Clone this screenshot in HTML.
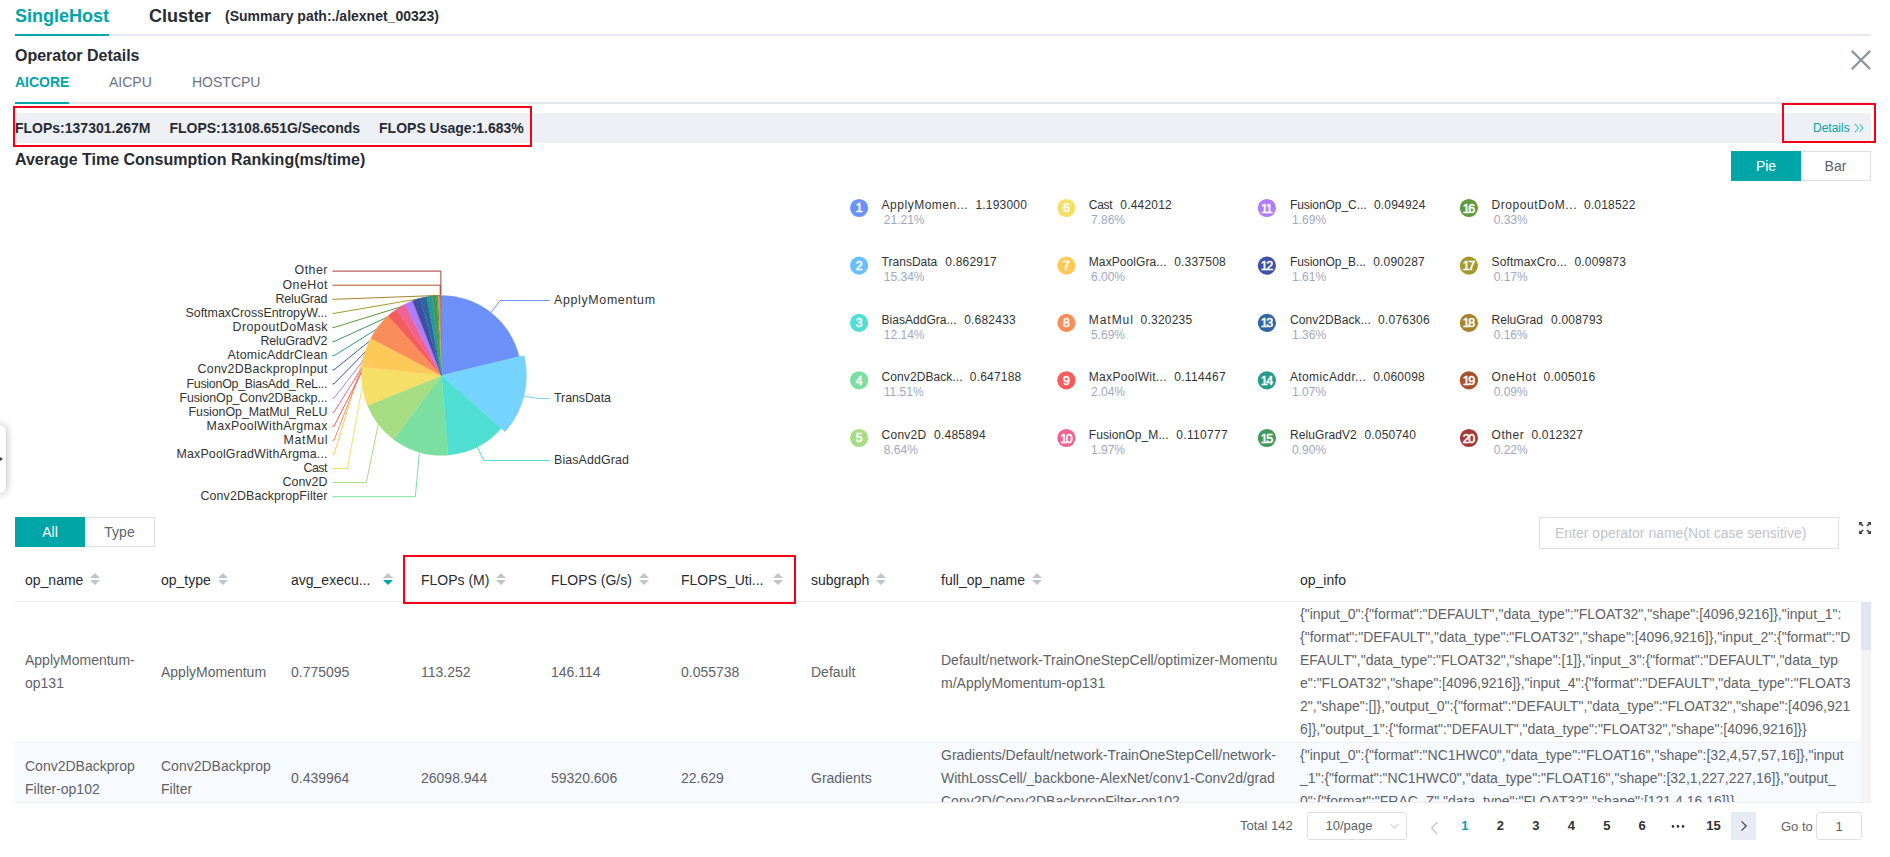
<!DOCTYPE html>
<html><head><meta charset="utf-8"><title>Operator Details</title>
<style>
*{box-sizing:border-box;margin:0;padding:0}
html,body{width:1890px;height:857px;overflow:hidden;background:#fff}
body{font-family:"Liberation Sans",Arial,sans-serif;color:#282b33;position:relative}
.abs{position:absolute;white-space:nowrap}
.chart{position:absolute;left:0;top:0}
.ln{position:absolute;height:2px;background:#e4e7ed}
.teal{background:#00a5a7}
.red{position:absolute;border:2px solid #f5001a}
.btn{position:absolute;height:30px;line-height:28px;text-align:center;font-size:14px;border:1px solid #dcdfe6;color:#606266;background:#fff}
.btn.on{background:#00a5a7;border-color:#00a5a7;color:#fff}
.th{position:absolute;top:556px;height:46px;line-height:46px;padding-left:10px;font-size:14px;color:#282b33;white-space:nowrap}
.thl{display:inline-block;vertical-align:middle}
.srt{display:inline-block;vertical-align:middle;position:relative;top:-1px}
.tbody{position:absolute;left:15px;top:602px;width:1846px;height:200px;overflow:hidden}
.tr{position:absolute;left:0;width:1846px;border-bottom:1px solid #ebeef5}
.tr.odd{background:#f7faff}
.td{position:absolute;top:0;height:100%;display:flex;align-items:center;padding:0 10px;font-size:14px;line-height:23px;color:#606266}
.cell{white-space:nowrap}
.pg{position:absolute;top:812px;height:28px;line-height:27px;font-size:13px;color:#303133;white-space:nowrap}
</style></head><body>
<div class="abs" style="left:15px;top:5px;font-size:18px;font-weight:bold;color:#00a5a7;line-height:22px">SingleHost</div>
<div class="abs" style="left:149px;top:5px;font-size:18px;font-weight:bold;color:#282b33;line-height:22px">Cluster</div>
<div class="abs" style="left:225px;top:7px;font-size:14px;font-weight:bold;color:#282b33;line-height:18px">(Summary path:./alexnet_00323)</div>
<div class="ln" style="left:15px;top:34px;width:1856px"></div>
<div class="ln teal" style="left:15px;top:34px;width:94px"></div>
<div class="abs" style="left:15px;top:46px;font-size:16px;font-weight:bold;line-height:20px">Operator Details</div>
<svg class="abs" style="left:1851px;top:50px" width="20" height="20" viewBox="0 0 20 20"><path d="M1.5 1.5L18.5 18.5M18.5 1.5L1.5 18.5" stroke="#8f939c" stroke-width="2.4" stroke-linecap="round" fill="none"/></svg>
<div class="abs" style="left:15px;top:73px;font-size:14px;font-weight:bold;color:#00a5a7;line-height:18px">AICORE</div>
<div class="abs" style="left:109px;top:73px;font-size:14px;color:#6c7280;line-height:18px">AICPU</div>
<div class="abs" style="left:192px;top:73px;font-size:14px;color:#6c7280;line-height:18px">HOSTCPU</div>
<div class="ln" style="left:15px;top:102px;width:1856px"></div>
<div class="ln teal" style="left:15px;top:102px;width:54px"></div>
<div class="abs" style="left:15px;top:113px;width:1856px;height:30px;background:#edf0f5"></div>
<div class="abs" style="left:15px;top:119px;font-size:14px;font-weight:bold;line-height:18px;color:#282b33">FLOPs:137301.267M<span style="display:inline-block;width:19px"></span>FLOPS:13108.651G/Seconds<span style="display:inline-block;width:19px"></span>FLOPS Usage:1.683%</div>
<div class="red" style="left:13px;top:106px;width:519px;height:41px"></div>
<div class="abs" style="left:1813px;top:121px;font-size:12px;color:#00a5a7;line-height:14px">Details</div>
<svg class="abs" style="left:1854px;top:123px" width="10" height="10" viewBox="0 0 10 10"><path d="M1 1L4.5 5L1 9M5.5 1L9 5L5.5 9" stroke="#00a5a7" stroke-width="0.9" fill="none"/></svg>
<div class="red" style="left:1782px;top:103px;width:94px;height:40px"></div>
<div class="abs" style="left:15px;top:150px;font-size:16px;font-weight:bold;line-height:20px">Average Time Consumption Ranking(ms/time)</div>
<div class="btn on" style="left:1731px;top:151px;width:70px">Pie</div>
<div class="btn" style="left:1801px;top:151px;width:70px;border-left:none">Bar</div>
<svg class="chart" width="1890" height="857" viewBox="0 0 1890 857" font-family="'Liberation Sans', sans-serif">
<g fill="none" stroke-width="1"><polyline points="491.0,312.5 500.2,300.5 549.5,300.5" stroke="#6c92fa"/><polyline points="524.0,396.0 538.5,398.5 549.5,398.5" stroke="#76d3ff"/><polyline points="477.2,447.0 483.9,460.5 549.5,460.5" stroke="#4eded2"/><polyline points="332.4,496.7 415.3,496.7 419.4,452.3" stroke="#7adfa0"/><polyline points="332.4,482.6 366.3,482.6 378.2,424.3" stroke="#a6dd82"/><polyline points="332.4,468.5 347.4,468.5 362.3,386.5" stroke="#f6df66"/><polyline points="332.4,454.4 334,454.4 365.0,352.1" stroke="#fdca5a"/><polyline points="332.4,440.3 334,440.3 378.5,326.1" stroke="#fa8e5a"/><polyline points="332.4,426.2 334,426.2 392.2,312.4" stroke="#f45c5e"/><polyline points="332.4,412.1 334,412.1 400.4,306.7" stroke="#f06292"/><polyline points="332.4,398.0 334,398.0 408.6,302.5" stroke="#b07cf7"/><polyline points="332.4,383.9 334,383.9 416.3,299.5" stroke="#3c51a6"/><polyline points="332.4,369.8 334,369.8 423.5,297.5" stroke="#2f66a1"/><polyline points="332.4,355.7 334,355.7 429.5,296.3" stroke="#279a8d"/><polyline points="332.4,341.6 334,341.6 434.4,295.7" stroke="#43975c"/><polyline points="332.4,327.5 334,327.5 437.5,295.5" stroke="#5e9a3e"/><polyline points="332.4,313.4 334,313.4 438.7,295.4" stroke="#a39a2c"/><polyline points="332.4,299.3 334,299.3 439.6,295.4" stroke="#a8822b"/><polyline points="332.4,285.2 440.2,285.2 440.2,295.4" stroke="#a8502b"/><polyline points="332.4,271.1 440.9,271.1 440.9,295.4" stroke="#a53a3a"/></g>
<g><path d="M441.50 375.40L441.50 295.40A80.0 80.0 0 0 1 519.25 356.55Z" fill="#6c92fa" stroke="#6c92fa" stroke-width="0.3"/><path d="M441.50 375.40L524.11 355.38A85.0 85.0 0 0 1 505.05 431.85Z" fill="#76d3ff" stroke="#76d3ff" stroke-width="0.3"/><path d="M441.50 375.40L501.31 428.53A80.0 80.0 0 0 1 448.05 455.13Z" fill="#4eded2" stroke="#4eded2" stroke-width="0.3"/><path d="M441.50 375.40L448.05 455.13A80.0 80.0 0 0 1 393.65 439.51Z" fill="#7adfa0" stroke="#7adfa0" stroke-width="0.3"/><path d="M441.50 375.40L393.65 439.51A80.0 80.0 0 0 1 367.41 405.57Z" fill="#a6dd82" stroke="#a6dd82" stroke-width="0.3"/><path d="M441.50 375.40L367.41 405.57A80.0 80.0 0 0 1 361.96 366.84Z" fill="#f6df66" stroke="#f6df66" stroke-width="0.3"/><path d="M441.50 375.40L361.96 366.84A80.0 80.0 0 0 1 370.70 338.15Z" fill="#fdca5a" stroke="#fdca5a" stroke-width="0.3"/><path d="M441.50 375.40L370.70 338.15A80.0 80.0 0 0 1 388.23 315.71Z" fill="#fa8e5a" stroke="#fa8e5a" stroke-width="0.3"/><path d="M441.50 375.40L388.23 315.71A80.0 80.0 0 0 1 396.28 309.41Z" fill="#f45c5e" stroke="#f45c5e" stroke-width="0.3"/><path d="M441.50 375.40L396.28 309.41A80.0 80.0 0 0 1 404.77 304.33Z" fill="#f06292" stroke="#f06292" stroke-width="0.3"/><path d="M441.50 375.40L404.77 304.33A80.0 80.0 0 0 1 412.50 300.84Z" fill="#b07cf7" stroke="#b07cf7" stroke-width="0.3"/><path d="M441.50 375.40L412.50 300.84A80.0 80.0 0 0 1 420.16 298.30Z" fill="#3c51a6" stroke="#3c51a6" stroke-width="0.3"/><path d="M441.50 375.40L420.16 298.30A80.0 80.0 0 0 1 426.80 296.76Z" fill="#2f66a1" stroke="#2f66a1" stroke-width="0.3"/><path d="M441.50 375.40L426.80 296.76A80.0 80.0 0 0 1 432.11 295.95Z" fill="#279a8d" stroke="#279a8d" stroke-width="0.3"/><path d="M441.50 375.40L432.11 295.95A80.0 80.0 0 0 1 436.63 295.55Z" fill="#43975c" stroke="#43975c" stroke-width="0.3"/><path d="M441.50 375.40L436.63 295.55A80.0 80.0 0 0 1 438.28 295.46Z" fill="#5e9a3e"/><path d="M441.50 375.40L438.28 295.46A80.0 80.0 0 0 1 439.16 295.43Z" fill="#a39a2c"/><path d="M441.50 375.40L439.16 295.43A80.0 80.0 0 0 1 439.95 295.42Z" fill="#a8822b"/><path d="M441.50 375.40L439.95 295.42A80.0 80.0 0 0 1 440.40 295.41Z" fill="#a8502b"/><path d="M441.50 375.40L440.40 295.41A80.0 80.0 0 0 1 441.50 295.40Z" fill="#a53a3a"/></g>
<g font-size="12.4" fill="#333"><text x="554" y="304.2" textLength="101">ApplyMomentum</text><text x="554" y="402.3" textLength="57">TransData</text><text x="554" y="464.1" textLength="75">BiasAddGrad</text><text x="327.5" y="500.4" text-anchor="end" textLength="127">Conv2DBackpropFilter</text><text x="327.5" y="486.3" text-anchor="end" textLength="45">Conv2D</text><text x="327.5" y="472.2" text-anchor="end" textLength="24">Cast</text><text x="327.5" y="458.1" text-anchor="end" textLength="151">MaxPoolGradWithArgma...</text><text x="327.5" y="444.0" text-anchor="end" textLength="44">MatMul</text><text x="327.5" y="429.9" text-anchor="end" textLength="121">MaxPoolWithArgmax</text><text x="327.5" y="415.8" text-anchor="end" textLength="139">FusionOp_MatMul_ReLU</text><text x="327.5" y="401.7" text-anchor="end" textLength="148">FusionOp_Conv2DBackp...</text><text x="327.5" y="387.6" text-anchor="end" textLength="141">FusionOp_BiasAdd_ReL...</text><text x="327.5" y="372.8" text-anchor="end" textLength="130">Conv2DBackpropInput</text><text x="327.5" y="359.4" text-anchor="end" textLength="100">AtomicAddrClean</text><text x="327.5" y="345.3" text-anchor="end" textLength="67">ReluGradV2</text><text x="327.5" y="331.2" text-anchor="end" textLength="95">DropoutDoMask</text><text x="327.5" y="317.1" text-anchor="end" textLength="142">SoftmaxCrossEntropyW...</text><text x="327.5" y="303.0" text-anchor="end" textLength="52">ReluGrad</text><text x="327.5" y="288.9" text-anchor="end" textLength="45">OneHot</text><text x="327.5" y="274.1" text-anchor="end" textLength="33">Other</text></g>
<g><circle cx="859.1" cy="208.0" r="9.1" fill="#6c92fa"/><text x="859.1" y="212.4" text-anchor="middle" fill="#fff" font-size="12.3" stroke="#fff" stroke-width="0.55">1</text><text x="881.6" y="208.7" fill="#333" font-size="12" textLength="86.1">ApplyMomen...</text><text x="975.4" y="208.7" fill="#333" font-size="12" textLength="51.5">1.193000</text><text x="883.8" y="223.8" fill="#9ea8c2" font-size="12">21.21%</text><circle cx="859.1" cy="265.6" r="9.1" fill="#6cbfff"/><text x="859.1" y="270.0" text-anchor="middle" fill="#fff" font-size="12.3" stroke="#fff" stroke-width="0.55">2</text><text x="881.6" y="266.3" fill="#333" font-size="12" textLength="55.7">TransData</text><text x="945.3" y="266.3" fill="#333" font-size="12" textLength="51.5">0.862917</text><text x="883.8" y="281.4" fill="#9ea8c2" font-size="12">15.34%</text><circle cx="859.1" cy="322.9" r="9.1" fill="#4eded2"/><text x="859.1" y="327.3" text-anchor="middle" fill="#fff" font-size="12.3" stroke="#fff" stroke-width="0.55">3</text><text x="881.6" y="323.6" fill="#333" font-size="12" textLength="74.9">BiasAddGra...</text><text x="964.2" y="323.6" fill="#333" font-size="12" textLength="51.5">0.682433</text><text x="883.8" y="338.7" fill="#9ea8c2" font-size="12">12.14%</text><circle cx="859.1" cy="380.3" r="9.1" fill="#7adfa0"/><text x="859.1" y="384.7" text-anchor="middle" fill="#fff" font-size="12.3" stroke="#fff" stroke-width="0.55">4</text><text x="881.6" y="381.0" fill="#333" font-size="12" textLength="80.9">Conv2DBack...</text><text x="969.8" y="381.0" fill="#333" font-size="12" textLength="51.5">0.647188</text><text x="883.8" y="396.1" fill="#9ea8c2" font-size="12">11.51%</text><circle cx="859.1" cy="438.0" r="9.1" fill="#a6dd82"/><text x="859.1" y="442.4" text-anchor="middle" fill="#fff" font-size="12.3" stroke="#fff" stroke-width="0.55">5</text><text x="881.6" y="438.7" fill="#333" font-size="12" textLength="44.5">Conv2D</text><text x="934.1" y="438.7" fill="#333" font-size="12" textLength="51.5">0.485894</text><text x="883.8" y="453.8" fill="#9ea8c2" font-size="12">8.64%</text><circle cx="1066.4" cy="208.0" r="9.1" fill="#f6df66"/><text x="1066.4" y="212.4" text-anchor="middle" fill="#fff" font-size="12.3" stroke="#fff" stroke-width="0.55">6</text><text x="1088.8" y="208.7" fill="#333" font-size="12" textLength="23.8">Cast</text><text x="1120.3" y="208.7" fill="#333" font-size="12" textLength="51.5">0.442012</text><text x="1091.0" y="223.8" fill="#9ea8c2" font-size="12">7.86%</text><circle cx="1066.4" cy="265.6" r="9.1" fill="#fdca5a"/><text x="1066.4" y="270.0" text-anchor="middle" fill="#fff" font-size="12.3" stroke="#fff" stroke-width="0.55">7</text><text x="1088.8" y="266.3" fill="#333" font-size="12" textLength="77.7">MaxPoolGra...</text><text x="1174.2" y="266.3" fill="#333" font-size="12" textLength="51.5">0.337508</text><text x="1091.0" y="281.4" fill="#9ea8c2" font-size="12">6.00%</text><circle cx="1066.4" cy="322.9" r="9.1" fill="#fa8e5a"/><text x="1066.4" y="327.3" text-anchor="middle" fill="#fff" font-size="12.3" stroke="#fff" stroke-width="0.55">8</text><text x="1088.8" y="323.6" fill="#333" font-size="12" textLength="44.1">MatMul</text><text x="1140.6" y="323.6" fill="#333" font-size="12" textLength="51.5">0.320235</text><text x="1091.0" y="338.7" fill="#9ea8c2" font-size="12">5.69%</text><circle cx="1066.4" cy="380.3" r="9.1" fill="#f45c5e"/><text x="1066.4" y="384.7" text-anchor="middle" fill="#fff" font-size="12.3" stroke="#fff" stroke-width="0.55">9</text><text x="1088.8" y="381.0" fill="#333" font-size="12" textLength="77.7">MaxPoolWit...</text><text x="1174.2" y="381.0" fill="#333" font-size="12" textLength="51.5">0.114467</text><text x="1091.0" y="396.1" fill="#9ea8c2" font-size="12">2.04%</text><circle cx="1066.4" cy="438.0" r="9.1" fill="#f06292"/><text x="1065.8" y="442.5" text-anchor="middle" fill="#fff" font-size="12.5" stroke="#fff" stroke-width="0.55" letter-spacing="-1.3">10</text><text x="1088.8" y="438.7" fill="#333" font-size="12" textLength="79.8">FusionOp_M...</text><text x="1176.3" y="438.7" fill="#333" font-size="12" textLength="51.5">0.110777</text><text x="1091.0" y="453.8" fill="#9ea8c2" font-size="12">1.97%</text><circle cx="1266.9" cy="208.0" r="9.1" fill="#b07cf7"/><text x="1266.3" y="212.5" text-anchor="middle" fill="#fff" font-size="12.5" stroke="#fff" stroke-width="0.55" letter-spacing="-1.3">11</text><text x="1289.9" y="208.7" fill="#333" font-size="12" textLength="76.7">FusionOp_C...</text><text x="1373.9" y="208.7" fill="#333" font-size="12" textLength="51.5">0.094924</text><text x="1292.1" y="223.8" fill="#9ea8c2" font-size="12">1.69%</text><circle cx="1266.9" cy="265.6" r="9.1" fill="#3c51a6"/><text x="1266.3" y="270.1" text-anchor="middle" fill="#fff" font-size="12.5" stroke="#fff" stroke-width="0.55" letter-spacing="-1.3">12</text><text x="1289.9" y="266.3" fill="#333" font-size="12" textLength="76">FusionOp_B...</text><text x="1373.2" y="266.3" fill="#333" font-size="12" textLength="51.5">0.090287</text><text x="1292.1" y="281.4" fill="#9ea8c2" font-size="12">1.61%</text><circle cx="1266.9" cy="322.9" r="9.1" fill="#2f66a1"/><text x="1266.3" y="327.4" text-anchor="middle" fill="#fff" font-size="12.5" stroke="#fff" stroke-width="0.55" letter-spacing="-1.3">13</text><text x="1289.9" y="323.6" fill="#333" font-size="12" textLength="80.9">Conv2DBack...</text><text x="1378.1" y="323.6" fill="#333" font-size="12" textLength="51.5">0.076306</text><text x="1292.1" y="338.7" fill="#9ea8c2" font-size="12">1.36%</text><circle cx="1266.9" cy="380.3" r="9.1" fill="#279a8d"/><text x="1266.3" y="384.8" text-anchor="middle" fill="#fff" font-size="12.5" stroke="#fff" stroke-width="0.55" letter-spacing="-1.3">14</text><text x="1289.9" y="381.0" fill="#333" font-size="12" textLength="76">AtomicAddr...</text><text x="1373.2" y="381.0" fill="#333" font-size="12" textLength="51.5">0.060098</text><text x="1292.1" y="396.1" fill="#9ea8c2" font-size="12">1.07%</text><circle cx="1266.9" cy="438.0" r="9.1" fill="#43975c"/><text x="1266.3" y="442.5" text-anchor="middle" fill="#fff" font-size="12.5" stroke="#fff" stroke-width="0.55" letter-spacing="-1.3">15</text><text x="1289.9" y="438.7" fill="#333" font-size="12" textLength="66.9">ReluGradV2</text><text x="1364.4" y="438.7" fill="#333" font-size="12" textLength="51.5">0.050740</text><text x="1292.1" y="453.8" fill="#9ea8c2" font-size="12">0.90%</text><circle cx="1468.9" cy="208.0" r="9.1" fill="#5e9a3e"/><text x="1468.3" y="212.5" text-anchor="middle" fill="#fff" font-size="12.5" stroke="#fff" stroke-width="0.55" letter-spacing="-1.3">16</text><text x="1491.5" y="208.7" fill="#333" font-size="12" textLength="85">DropoutDoM...</text><text x="1583.9" y="208.7" fill="#333" font-size="12" textLength="51.5">0.018522</text><text x="1493.7" y="223.8" fill="#9ea8c2" font-size="12">0.33%</text><circle cx="1468.9" cy="265.6" r="9.1" fill="#a39a2c"/><text x="1468.3" y="270.1" text-anchor="middle" fill="#fff" font-size="12.5" stroke="#fff" stroke-width="0.55" letter-spacing="-1.3">17</text><text x="1491.5" y="266.3" fill="#333" font-size="12" textLength="75.3">SoftmaxCro...</text><text x="1574.4" y="266.3" fill="#333" font-size="12" textLength="51.5">0.009873</text><text x="1493.7" y="281.4" fill="#9ea8c2" font-size="12">0.17%</text><circle cx="1468.9" cy="322.9" r="9.1" fill="#a8822b"/><text x="1468.3" y="327.4" text-anchor="middle" fill="#fff" font-size="12.5" stroke="#fff" stroke-width="0.55" letter-spacing="-1.3">18</text><text x="1491.5" y="323.6" fill="#333" font-size="12" textLength="51.5">ReluGrad</text><text x="1551" y="323.6" fill="#333" font-size="12" textLength="51.5">0.008793</text><text x="1493.7" y="338.7" fill="#9ea8c2" font-size="12">0.16%</text><circle cx="1468.9" cy="380.3" r="9.1" fill="#a8502b"/><text x="1468.3" y="384.8" text-anchor="middle" fill="#fff" font-size="12.5" stroke="#fff" stroke-width="0.55" letter-spacing="-1.3">19</text><text x="1491.5" y="381.0" fill="#333" font-size="12" textLength="44.5">OneHot</text><text x="1543.6" y="381.0" fill="#333" font-size="12" textLength="51.5">0.005016</text><text x="1493.7" y="396.1" fill="#9ea8c2" font-size="12">0.09%</text><circle cx="1468.9" cy="438.0" r="9.1" fill="#a53a3a"/><text x="1468.3" y="442.5" text-anchor="middle" fill="#fff" font-size="12.5" stroke="#fff" stroke-width="0.55" letter-spacing="-1.3">20</text><text x="1491.5" y="438.7" fill="#333" font-size="12" textLength="32.2">Other</text><text x="1531.4" y="438.7" fill="#333" font-size="12" textLength="51.5">0.012327</text><text x="1493.7" y="453.8" fill="#9ea8c2" font-size="12">0.22%</text></g>
</svg>
<div class="abs" style="left:-4px;top:425px;width:10px;height:68px;background:#fff;border-radius:0 6px 6px 0;box-shadow:0 0 9px rgba(0,0,0,.32)"></div>
<div class="abs" style="left:0;top:457px;width:0;height:0;border:2.5px solid transparent;border-left:3px solid #3e4355;border-right:none"></div>
<div class="btn on" style="left:15px;top:517px;width:70px">All</div>
<div class="btn" style="left:85px;top:517px;width:70px;border-left:none">Type</div>
<div class="abs" style="left:1539px;top:517px;width:300px;height:32px;border:1px solid #dcdfe6;font-size:14px;color:#c0c4cc;line-height:30px;padding-left:15px">Enter operator name(Not case sensitive)</div>
<svg class="abs" style="left:1858px;top:521px" width="14" height="14" viewBox="0 0 13 13"><path d="M1 1h3.5L3.3 2.2 5.2 4.1 4.1 5.2 2.2 3.3 1 4.5zM12 1v3.5L10.800000000000001 3.3 8.9 5.2 7.8 4.1 9.7 2.2 8.5 1zM1 12V8.5L2.2 9.7 4.1 7.8 5.2 8.9 3.3 10.8 4.5 12zM12 12H8.5L9.7 10.8 7.8 8.9 8.9 7.8 10.8 9.7 12 8.5z" fill="#3e4355"/></svg>
<div class="th" style="left:15px;width:130px"><span class="thl">op_name</span><svg class="srt" style="margin-left:7px" width="10" height="12" viewBox="0 0 10 12"><path d="M5 0L10 5H0z" fill="#c0c4cc"/><path d="M0 7H10L5 12z" fill="#c0c4cc"/></svg></div><div class="th" style="left:151px;width:130px"><span class="thl">op_type</span><svg class="srt" style="margin-left:7px" width="10" height="12" viewBox="0 0 10 12"><path d="M5 0L10 5H0z" fill="#c0c4cc"/><path d="M0 7H10L5 12z" fill="#c0c4cc"/></svg></div><div class="th" style="left:281px;width:130px"><span class="thl">avg_execu...</span><svg class="srt" style="margin-left:13px" width="10" height="12" viewBox="0 0 10 12"><path d="M5 0L10 5H0z" fill="#c0c4cc"/><path d="M0 7H10L5 12z" fill="#00a5a7"/></svg></div><div class="th" style="left:411px;width:130px"><span class="thl">FLOPs (M)</span><svg class="srt" style="margin-left:7px" width="10" height="12" viewBox="0 0 10 12"><path d="M5 0L10 5H0z" fill="#c0c4cc"/><path d="M0 7H10L5 12z" fill="#c0c4cc"/></svg></div><div class="th" style="left:541px;width:130px"><span class="thl">FLOPS (G/s)</span><svg class="srt" style="margin-left:7px" width="10" height="12" viewBox="0 0 10 12"><path d="M5 0L10 5H0z" fill="#c0c4cc"/><path d="M0 7H10L5 12z" fill="#c0c4cc"/></svg></div><div class="th" style="left:671px;width:130px"><span class="thl">FLOPS_Uti...</span><svg class="srt" style="margin-left:10px" width="10" height="12" viewBox="0 0 10 12"><path d="M5 0L10 5H0z" fill="#c0c4cc"/><path d="M0 7H10L5 12z" fill="#c0c4cc"/></svg></div><div class="th" style="left:801px;width:130px"><span class="thl">subgraph</span><svg class="srt" style="margin-left:7px" width="10" height="12" viewBox="0 0 10 12"><path d="M5 0L10 5H0z" fill="#c0c4cc"/><path d="M0 7H10L5 12z" fill="#c0c4cc"/></svg></div><div class="th" style="left:931px;width:359px"><span class="thl">full_op_name</span><svg class="srt" style="margin-left:7px" width="10" height="12" viewBox="0 0 10 12"><path d="M5 0L10 5H0z" fill="#c0c4cc"/><path d="M0 7H10L5 12z" fill="#c0c4cc"/></svg></div><div class="th" style="left:1290px;width:571px"><span class="thl">op_info</span></div>
<div class="abs" style="left:15px;top:601px;width:1846px;height:1px;background:#ebeef5"></div>
<div class="red" style="left:403px;top:555px;width:393px;height:49px"></div>
<div class="tbody">
<div class="tr " style="top:0px;height:141px"><div class="td" style="left:0px;width:130px"><div class="cell">ApplyMomentum-<br>op131</div></div><div class="td" style="left:136px;width:130px"><div class="cell">ApplyMomentum</div></div><div class="td" style="left:266px;width:130px"><div class="cell">0.775095</div></div><div class="td" style="left:396px;width:130px"><div class="cell">113.252</div></div><div class="td" style="left:526px;width:130px"><div class="cell">146.114</div></div><div class="td" style="left:656px;width:130px"><div class="cell">0.055738</div></div><div class="td" style="left:786px;width:130px"><div class="cell">Default</div></div><div class="td" style="left:916px;width:359px"><div class="cell">Default/network-TrainOneStepCell/optimizer-Momentu<br>m/ApplyMomentum-op131</div></div><div class="td" style="left:1275px;width:571px"><div class="cell">{"input_0":{"format":"DEFAULT","data_type":"FLOAT32","shape":[4096,9216]},"input_1":<br>{"format":"DEFAULT","data_type":"FLOAT32","shape":[4096,9216]},"input_2":{"format":"D<br>EFAULT","data_type":"FLOAT32","shape":[1]},"input_3":{"format":"DEFAULT","data_typ<br>e":"FLOAT32","shape":[4096,9216]},"input_4":{"format":"DEFAULT","data_type":"FLOAT3<br>2","shape":[]},"output_0":{"format":"DEFAULT","data_type":"FLOAT32","shape":[4096,921<br>6]},"output_1":{"format":"DEFAULT","data_type":"FLOAT32","shape":[4096,9216]}}</div></div></div>
<div class="tr odd" style="top:141px;height:71px"><div class="td" style="left:0px;width:130px"><div class="cell">Conv2DBackprop<br>Filter-op102</div></div><div class="td" style="left:136px;width:130px"><div class="cell">Conv2DBackprop<br>Filter</div></div><div class="td" style="left:266px;width:130px"><div class="cell">0.439964</div></div><div class="td" style="left:396px;width:130px"><div class="cell">26098.944</div></div><div class="td" style="left:526px;width:130px"><div class="cell">59320.606</div></div><div class="td" style="left:656px;width:130px"><div class="cell">22.629</div></div><div class="td" style="left:786px;width:130px"><div class="cell">Gradients</div></div><div class="td" style="left:916px;width:359px"><div class="cell">Gradients/Default/network-TrainOneStepCell/network-<br>WithLossCell/_backbone-AlexNet/conv1-Conv2d/grad<br>Conv2D/Conv2DBackpropFilter-op102</div></div><div class="td" style="left:1275px;width:571px"><div class="cell">{"input_0":{"format":"NC1HWC0","data_type":"FLOAT16","shape":[32,4,57,57,16]},"input<br>_1":{"format":"NC1HWC0","data_type":"FLOAT16","shape":[32,1,227,227,16]},"output_<br>0":{"format":"FRAC_Z","data_type":"FLOAT32","shape":[121,4,16,16]}}</div></div></div>
</div>
<div class="abs" style="left:1861px;top:602px;width:10px;height:200px;background:#f4f4f4"></div>
<div class="abs" style="left:1861px;top:602px;width:10px;height:48px;background:#dee6f3"></div>
<div class="abs" style="left:15px;top:802px;width:1856px;height:1px;background:#ebeef5"></div>
<div class="pg" style="left:1240px;color:#606266">Total 142</div>
<div class="pg" style="left:1307px;width:100px;border:1px solid #dcdfe6;border-radius:3px;line-height:26px;padding-left:17.5px;color:#606266">10/page</div>
<svg class="abs" style="left:1390px;top:822.5px" width="9" height="7" viewBox="0 0 9 7"><path d="M0.7 1L4.5 5.2L8.3 1" stroke="#c0c4cc" stroke-width="1" fill="none"/></svg>
<svg class="abs" style="left:1430px;top:821px" width="9" height="14" viewBox="0 0 9 14"><path d="M7.3 1.2L1.7 7.3L7.3 13.4" stroke="#c0c4cc" stroke-width="1.3" fill="none"/></svg>
<div class="pg" style="left:1461.3px;font-weight:bold;color:#00a5a7">1</div>
<div class="pg" style="left:1496.8px;font-weight:bold">2</div>
<div class="pg" style="left:1532.2px;font-weight:bold">3</div>
<div class="pg" style="left:1567.8px;font-weight:bold">4</div>
<div class="pg" style="left:1603.2px;font-weight:bold">5</div>
<div class="pg" style="left:1638.6px;font-weight:bold">6</div>
<svg class="abs" style="left:1671px;top:824px" width="14" height="5" viewBox="0 0 14 5"><circle cx="2" cy="2.4" r="1.3" fill="#303133"/><circle cx="7" cy="2.4" r="1.3" fill="#303133"/><circle cx="12" cy="2.4" r="1.3" fill="#303133"/></svg>
<div class="pg" style="left:1706.2px;font-weight:bold">15</div>
<div class="abs" style="left:1731px;top:812px;width:25px;height:28px;background:#e6ebf5"></div>
<svg class="abs" style="left:1740px;top:820px" width="8" height="12" viewBox="0 0 8 12"><path d="M1.5 1.3L6.2 6L1.5 10.7" stroke="#3c3f47" stroke-width="1.2" fill="none"/></svg>
<div class="pg" style="left:1781px;top:813px;color:#606266">Go to</div>
<div class="pg" style="left:1816px;width:46px;border:1px solid #dcdfe6;border-radius:3px;line-height:28px;text-align:center;color:#606266">1</div>
</body></html>
